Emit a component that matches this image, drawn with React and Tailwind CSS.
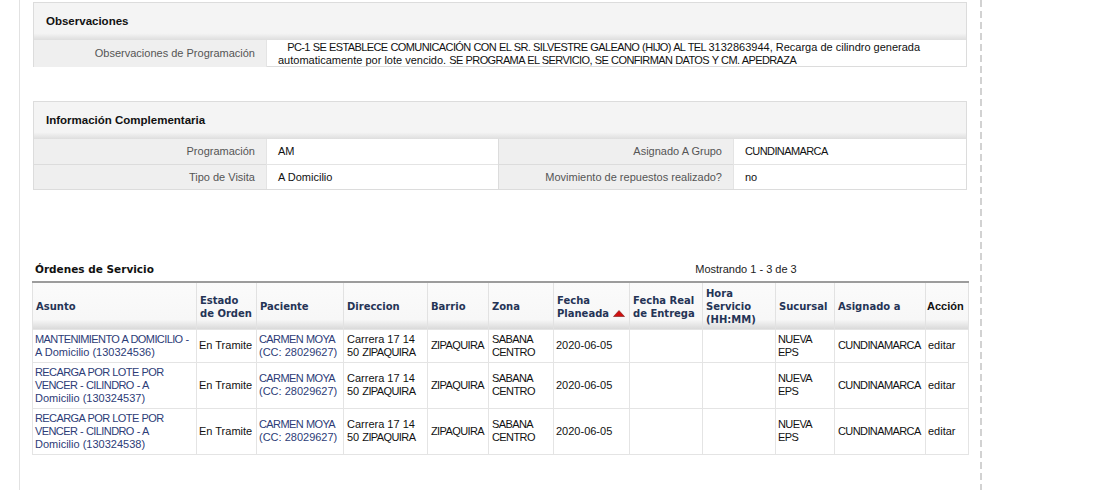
import React from 'react'

const sans = { fontFamily: '"Liberation Sans", Arial, sans-serif' }
const verd = { fontFamily: '"DejaVu Sans", Verdana, sans-serif' }

// uppercase runs render narrower in the original; tighten them a bit
function C({ children }) {
  return <span className="tracking-[-0.6px] [word-spacing:0.4px]">{children}</span>
}

const rows = [
  { asunto: [<C key="a">MANTENIMIENTO A DOMICILIO -</C>, 'A Domicilio (130324536)'] },
  { asunto: [<C key="a">RECARGA POR LOTE POR</C>, <C key="b">VENCER - CILINDRO - A</C>, 'Domicilio (130324537)'] },
  { asunto: [<C key="a">RECARGA POR LOTE POR</C>, <C key="b">VENCER - CILINDRO - A</C>, 'Domicilio (130324538)'] },
]

const cols = [
  { w: 'w-[164px]', label: ['Asunto'] },
  { w: 'w-[60px]', label: ['Estado', 'de Orden'] },
  { w: 'w-[87px]', label: ['Paciente'] },
  { w: 'w-[84px]', label: ['Direccion'] },
  { w: 'w-[61px]', label: ['Barrio'] },
  { w: 'w-[65px]', label: ['Zona'] },
  { w: 'w-[76px]', label: ['Fecha', 'Planeada'], sort: true },
  { w: 'w-[73px]', label: ['Fecha Real', 'de Entrega'] },
  { w: 'w-[73px]', label: ['Hora', 'Servicio', '(HH:MM)'] },
  { w: 'w-[59px]', label: ['Sucursal'] },
  { w: 'w-[91px]', label: ['Asignado a'] },
  { w: 'w-[43px]', label: ['Acción'], plain: true },
]

function PanelHeader({ children }) {
  return (
    <div className="h-[37px] flex items-center pl-[12px] text-[11.5px] font-bold text-[#111] bg-[linear-gradient(to_bottom,#f4f4f4_0%,#f4f4f4_82%,#dedede_100%)]">
      {children}
    </div>
  )
}

function Label({ children, className = '' }) {
  return (
    <div className={`bg-[#efefef] text-[#555] pr-[11px] flex items-center justify-end ${className}`}>
      {children}
    </div>
  )
}

function Value({ children, className = '' }) {
  return <div className={`pl-[11px] flex items-center border-l border-[#e4e4e4] ${className}`}>{children}</div>
}

const td = 'border border-[#e4e4e4] pr-[2px] align-middle whitespace-nowrap'

export default function App() {
  return (
    <div className="flex h-[490px] w-[1104px] bg-white text-[11px] leading-[13px]" style={sans}>
      <div className="w-[19px]" />
      <div className="w-[961px] border-l border-[#e2e2e2] pl-[13px] pr-[13px] pt-[2px]">
        {/* Observaciones */}
        <div className="border border-[#dcdcdc]">
          <PanelHeader>Observaciones</PanelHeader>
          <div className="grid grid-cols-[232px_1fr] h-[26px] text-[#111]">
            <Label>Observaciones de Programación</Label>
            <div className="pl-[11px] border-l border-[#e4e4e4] flex items-center pt-[1px]">
              <div className="whitespace-nowrap">
                <div>
                  &nbsp;&nbsp;&nbsp;<C>PC-1 SE ESTABLECE COMUNICACIÓN CON EL SR. SILVESTRE GALEANO (HIJO) AL TEL </C>3132863944, Recarga de cilindro generada
                </div>
                <div>
                  automaticamente por lote vencido. <C>SE PROGRAMA EL SERVICIO, SE CONFIRMAN DATOS Y CM. APEDRAZA</C>
                </div>
              </div>
            </div>
          </div>
        </div>

        {/* Información Complementaria */}
        <div className="border border-[#dcdcdc] mt-[34px]">
          <PanelHeader>Información Complementaria</PanelHeader>
          <div className="grid grid-cols-[232px_232px_235px_1fr] grid-rows-[25px_25px] text-[#111]">
            <Label>Programación</Label>
            <Value>AM</Value>
            <Label className="border-l border-[#dcdcdc]">Asignado A Grupo</Label>
            <Value><C>CUNDINAMARCA</C></Value>
            <Label className="border-t border-[#dcdcdc]">Tipo de Visita</Label>
            <Value className="border-t">A Domicilio</Value>
            <Label className="border-l border-t border-[#dcdcdc]">Movimiento de repuestos realizado?</Label>
            <Value className="border-t">no</Value>
          </div>
        </div>

        {/* Órdenes de Servicio */}
        <div className="mt-[72px] -ml-px w-[936px]">
          <div className="flex items-end h-[14px] mb-[5px]">
            <div className="flex-1 pl-[3px] font-bold text-[10.5px] text-[#111]" style={verd}>Órdenes de Servicio</div>
            <div className="w-[200px] text-center text-[#222]">Mostrando 1 - 3 de 3</div>
            <div className="w-[122px]" />
          </div>
          <table className="border-collapse table-fixed w-[936px] border-t-2 border-[#9c9c9c]">
            <thead>
              <tr className="h-[47px] bg-[linear-gradient(to_bottom,#fbfbfb_0%,#f7f7f7_80%,#dadada_100%)]">
                {cols.map((c, i) => (
                  <th
                    key={i}
                    className={`${c.w} border-x border-[#e2e2e2] text-left align-middle pr-[2px] pt-[4px] pb-[2px] font-bold text-[10px] leading-[13px] ${c.plain ? 'pl-[1px] text-[#111]' : 'pl-[3px] text-[#253456]'}`}
                    style={c.plain ? { ...sans, fontSize: '11px' } : verd}
                  >
                    {c.label.map((l, j) => (
                      <div key={j} className="whitespace-nowrap flex items-center">
                        {l}
                        {c.sort && j === c.label.length - 1 && (
                          <svg width="12" height="7" viewBox="0 0 12 7" className="ml-[4px] mt-[1px]">
                            <polygon points="6,0.5 11.5,6.5 0.5,6.5" fill="#d01010" stroke="#7a1a1a" strokeWidth="0.6" />
                          </svg>
                        )}
                      </div>
                    ))}
                  </th>
                ))}
              </tr>
            </thead>
            <tbody>
              {rows.map((r, i) => (
                <tr key={i} className={i === 0 ? 'h-[33px]' : 'h-[46px]'}>
                  <td className={`${td} pl-[2px] text-[#2d3c77]`}>
                    {r.asunto.map((l, j) => <div key={j}>{l}</div>)}
                  </td>
                  <td className={`${td} pl-[2px] text-[#111]`}>En Tramite</td>
                  <td className={`${td} pl-[2px] text-[#2d3c77]`}>
                    <div><C>CARMEN MOYA</C></div>
                    <div>(CC: 28029627)</div>
                  </td>
                  <td className={`${td} pl-[3px] text-[#111]`}>
                    <div>Carrera 17 14</div>
                    <div>50 <C>ZIPAQUIRA</C></div>
                  </td>
                  <td className={`${td} pl-[3px] text-[#111]`}><C>ZIPAQUIRA</C></td>
                  <td className={`${td} pl-[3px] text-[#111]`}>
                    <div><C>SABANA</C></div>
                    <div><C>CENTRO</C></div>
                  </td>
                  <td className={`${td} pl-[2px] text-[#111]`}>2020-06-05</td>
                  <td className={td} />
                  <td className={td} />
                  <td className={`${td} pl-[2px] text-[#111]`}>
                    <div><C>NUEVA</C></div>
                    <div><C>EPS</C></div>
                  </td>
                  <td className={`${td} pl-[3px] text-[#111]`}><C>CUNDINAMARCA</C></td>
                  <td className={`${td} pl-[2px] text-[#111]`}>editar</td>
                </tr>
              ))}
            </tbody>
          </table>
        </div>
      </div>
      <div className="w-[2px] h-full bg-[repeating-linear-gradient(to_bottom,#d2d2d2_0px,#d2d2d2_7px,transparent_7px,transparent_11px)]" />
    </div>
  )
}
